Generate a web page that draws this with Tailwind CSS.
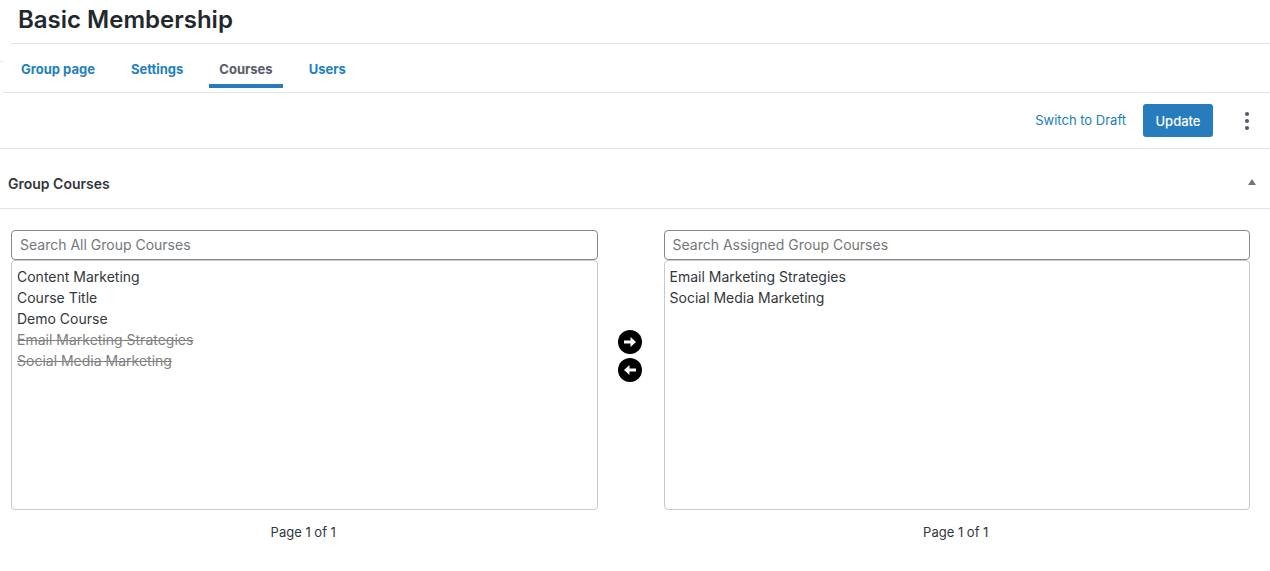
<!DOCTYPE html>
<html lang="en">
<head>
  <meta charset="UTF-8" />
  <meta name="viewport" content="width=device-width, initial-scale=1.0"/>
  <title>Basic Membership</title>
  <script src="https://cdn.jsdelivr.net/npm/@tailwindcss/browser@4"></script>
</head>
<body class="bg-white font-['Inter','Liberation_Sans',sans-serif] text-sm text-[#32373c]">
  <header class="relative">
    <h1 class="ml-[11px] h-11 border-b border-[#e2e4e7] pl-[7px] pt-1 text-2xl leading-8 font-semibold text-[#23282d]">Basic Membership</h1>
    <span class="absolute left-0 top-[61px] w-[3px] border-t border-[#e2e4e7]"></span>
    <nav class="ml-[3px] flex h-[49px] gap-4 border-b border-[#e2e4e7] pl-2 text-[13px] leading-5 font-bold text-[#2480be]">
      <a href="#" class="mb-1 px-[10px] pt-[15px]">Group page</a>
      <a href="#" class="mb-1 px-[10px] pt-[15px]">Settings</a>
      <a href="#" aria-current="page" class="mb-1 border-b-4 border-[#277cbd] px-[10px] pt-[15px] text-[#555d66]">Courses</a>
      <a href="#" class="mb-1 px-[10px] pt-[15px]">Users</a>
    </nav>
  </header>

  <div class="flex h-14 items-center justify-end border-b border-[#e2e4e7] pr-[11px] text-[13px]">
    <button type="button" class="mr-[17px] text-[#1480bb]">Switch to Draft</button>
    <button type="button" class="h-[33px] w-[70px] rounded-[3px] bg-[#277cbd] pt-[2px] font-medium text-white">Update</button>
    <button type="button" aria-label="More options" class="ml-[22px] flex size-6 items-center justify-center text-[#555d66]">
      <svg class="size-6" viewBox="0 0 24 24" fill="currentColor">
        <circle cx="12" cy="5" r="2.1"/>
        <circle cx="12" cy="12" r="2.1"/>
        <circle cx="12" cy="19" r="2.1"/>
      </svg>
    </button>
  </div>

  <main>
    <div class="flex h-[60px] items-center justify-between border-b border-[#e2e4e7] pl-2 pr-[14px] pt-[10px]">
      <h2 class="font-semibold">Group Courses</h2>
      <button type="button" aria-label="Toggle panel" class="mb-1 text-[#72777c]">
        <svg class="h-[6px] w-2" viewBox="0 0 8 6" fill="currentColor"><path d="M4 0 8 6H0z"/></svg>
      </button>
    </div>

    <div class="flex pl-[11px] pr-5 pt-[21px]">
      <section class="min-w-0 flex-1">
        <input type="text" aria-label="Search All Group Courses" placeholder="Search All Group Courses" class="block h-[30px] w-full rounded border border-[#7e8993] px-2 pb-[2px] placeholder:text-[#72777c]"/>
        <select multiple size="11" aria-label="All Group Courses" class="block h-[250px] w-full overflow-hidden rounded border border-[#c8cacc] px-[5px] py-[7px]">
          <option class="h-[21px] p-0 leading-[21px]">Content Marketing</option>
          <option class="h-[21px] p-0 leading-[21px]">Course Title</option>
          <option class="h-[21px] p-0 leading-[21px]">Demo Course</option>
          <option disabled class="h-[21px] p-0 leading-[21px] text-[#808080] line-through">Email Marketing Strategies</option>
          <option disabled class="h-[21px] p-0 leading-[21px] text-[#808080] line-through">Social Media Marketing</option>
        </select>
        <p class="mt-3 pr-[2px] text-center text-[13px] leading-5">Page 1 of 1</p>
      </section>

      <div class="flex w-[66px] flex-col items-center gap-1 pr-[2px] pt-[100px]">
        <button type="button" aria-label="Add selected courses" class="size-6">
          <svg class="size-6" viewBox="0 0 24 24">
            <circle cx="12" cy="12" r="12" fill="#000"/>
            <path fill="#fff" d="M6 10.500h6.500V7l5.500 5-5.500 5v-3.500H6z"/>
          </svg>
        </button>
        <button type="button" aria-label="Remove selected courses" class="size-6">
          <svg class="size-6" viewBox="0 0 24 24">
            <circle cx="12" cy="12" r="12" fill="#000"/>
            <path fill="#fff" d="M18 10.500h-6.500V7L6 12l5.500 5v-3.500H18z"/>
          </svg>
        </button>
      </div>

      <section class="min-w-0 flex-1">
        <input type="text" aria-label="Search Assigned Group Courses" placeholder="Search Assigned Group Courses" class="block h-[30px] w-full rounded border border-[#7e8993] px-2 pb-[2px] placeholder:text-[#72777c]"/>
        <select multiple size="11" aria-label="Assigned Group Courses" class="block h-[250px] w-full overflow-hidden rounded border border-[#c8cacc] px-[5px] py-[7px]">
          <option class="h-[21px] p-0 leading-[21px]">Email Marketing Strategies</option>
          <option class="h-[21px] p-0 leading-[21px]">Social Media Marketing</option>
        </select>
        <p class="mt-3 pr-[2px] text-center text-[13px] leading-5">Page 1 of 1</p>
      </section>
    </div>
  </main>
</body>
</html>
